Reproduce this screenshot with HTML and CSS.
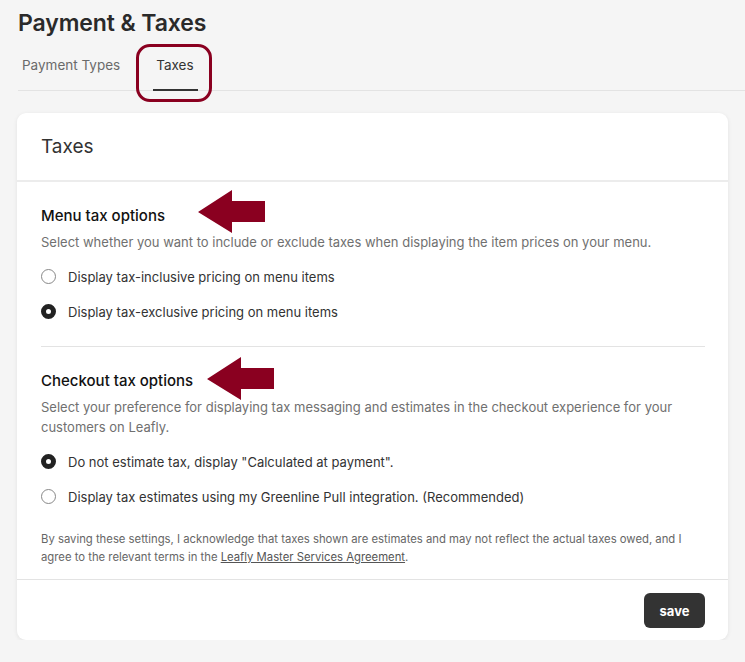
FILE: index.html
```html
<!DOCTYPE html>
<html lang="en">
<head>
  <meta charset="UTF-8" />
  <title>Payment &amp; Taxes</title>
  <link rel="stylesheet" href="styles.css">
</head>
<body>
  <div class="page">
    <h1 class="page-title">Payment &amp; Taxes</h1>

    <nav class="tabs">
      <a href="#" class="tab">Payment Types</a>
      <a href="#" class="tab active">Taxes</a>
      <span class="tab-ring"></span>
    </nav>

    <section class="card">
      <div class="card-header">Taxes</div>

      <div class="card-body">
        <div class="option-group">
          <h3 class="group-title">Menu tax options
            <svg class="arrow" width="68" height="44" viewBox="0 0 68 44"><polygon points="0,22 34,0 34,11 67,11 67,32 34,32 34,43" /></svg>
          </h3>
          <p class="group-desc">Select whether you want to include or exclude taxes when displaying the item prices on your menu.</p>
          <label class="radio"><span class="dot"></span>Display tax-inclusive pricing on menu items</label>
          <label class="radio"><span class="dot checked"></span>Display tax-exclusive pricing on menu items</label>
        </div>

        <div class="option-group">
          <h3 class="group-title">Checkout tax options
            <svg class="arrow" width="68" height="44" viewBox="0 0 68 44"><polygon points="0,22 34,0 34,11 67,11 67,32 34,32 34,43" /></svg>
          </h3>
          <p class="group-desc">Select your preference for displaying tax messaging and estimates in the checkout experience for your customers on Leafly.</p>
          <label class="radio"><span class="dot checked"></span>Do not estimate tax, display "Calculated at payment".</label>
          <label class="radio"><span class="dot"></span>Display tax estimates using my Greenline Pull integration. (Recommended)</label>
          <p class="disclaimer">By saving these settings, I acknowledge that taxes shown are estimates and may not reflect the actual taxes owed, and I agree to the relevant terms in the <a href="#">Leafly Master Services Agreement</a>.</p>
        </div>
      </div>

      <div class="card-footer">
        <button class="save-btn">save</button>
      </div>
    </section>
  </div>
</body>
</html>
```

FILE: styles.css
```css
:root {
  --bg: #f5f5f5;
  --text: #222;
  --muted: #707070;
  --line: #e3e3e3;
  --mark: #8a0020;
}

body {
  margin: 0;
  background: var(--bg);
  font-family: Inter, Roboto, sans-serif;
  color: var(--text);
}

.page {
  padding: 9px 0 0 18px;
}

.page-title {
  margin: 0;
  font-size: 23px;
  font-weight: 600;
  line-height: 28px;
  color: #2a2a2a;
  letter-spacing: -0.1px;
}

.tabs {
  position: relative;
  display: flex;
  gap: 30px;
  margin-top: 7px;
  border-bottom: 1px solid var(--line);
}

.tab {
  display: block;
  padding: 13px 3px 16px 4px;
  font-size: 13.5px;
  color: #6a6a6a;
  text-decoration: none;
}

.tab.active {
  padding: 13px 4px 16px 3px;
  color: #333;
  border-bottom: 2px solid #333;
  margin-bottom: -1px;
}

.tab-ring {
  position: absolute;
  left: 118px;
  top: 0;
  width: 70px;
  height: 52px;
  border: 3px solid var(--mark);
  border-radius: 14px;
}

.card {
  margin: 22px 17px 0 -1px;
  background: #fff;
  border-radius: 9px;
  box-shadow: 0 1px 4px rgba(0, 0, 0, 0.08);
}

.card-header {
  padding: 22px 24px 21px;
  font-size: 19px;
  line-height: 24px;
  color: #333;
  border-bottom: 2px solid #ececec;
}

.card-body {
  padding: 0 23px 0 24px;
}

.option-group {
  padding: 24px 0 17px;
  border-bottom: 1px solid var(--line);
}

.option-group:last-child {
  border-bottom: 0;
  padding-bottom: 13px;
}

.group-title {
  position: relative;
  margin: 0;
  font-size: 15px;
  font-weight: 500;
  line-height: 20px;
  color: #111;
}

.arrow {
  position: absolute;
  top: -16px;
  fill: var(--mark);
}

.option-group:first-child .arrow { left: 157px; }
.option-group:nth-child(2) .arrow { left: 166px; top: -14px; }

.group-desc {
  margin: 6px 0 7px;
  font-size: 13px;
  line-height: 20px;
  color: var(--muted);
}

.radio {
  display: flex;
  align-items: center;
  gap: 12px;
  height: 35px;
  font-size: 13px;
  color: #333;
}

.dot {
  box-sizing: border-box;
  width: 15px;
  height: 15px;
  border: 1px solid #888;
  border-radius: 50%;
}

.dot.checked {
  border: 5px solid #222;
}

.disclaimer {
  margin: 16px 0 0;
  font-size: 11.3px;
  line-height: 18px;
  color: #666;
}

.disclaimer a {
  color: #555;
}

.card-footer {
  display: flex;
  justify-content: flex-end;
  padding: 13px 23px 12px;
  border-top: 1px solid var(--line);
}

.save-btn {
  width: 61px;
  height: 35px;
  background: #333;
  color: #fff;
  border: 0;
  border-radius: 6px;
  font-family: inherit;
  font-size: 13px;
  font-weight: 700;
}
```
